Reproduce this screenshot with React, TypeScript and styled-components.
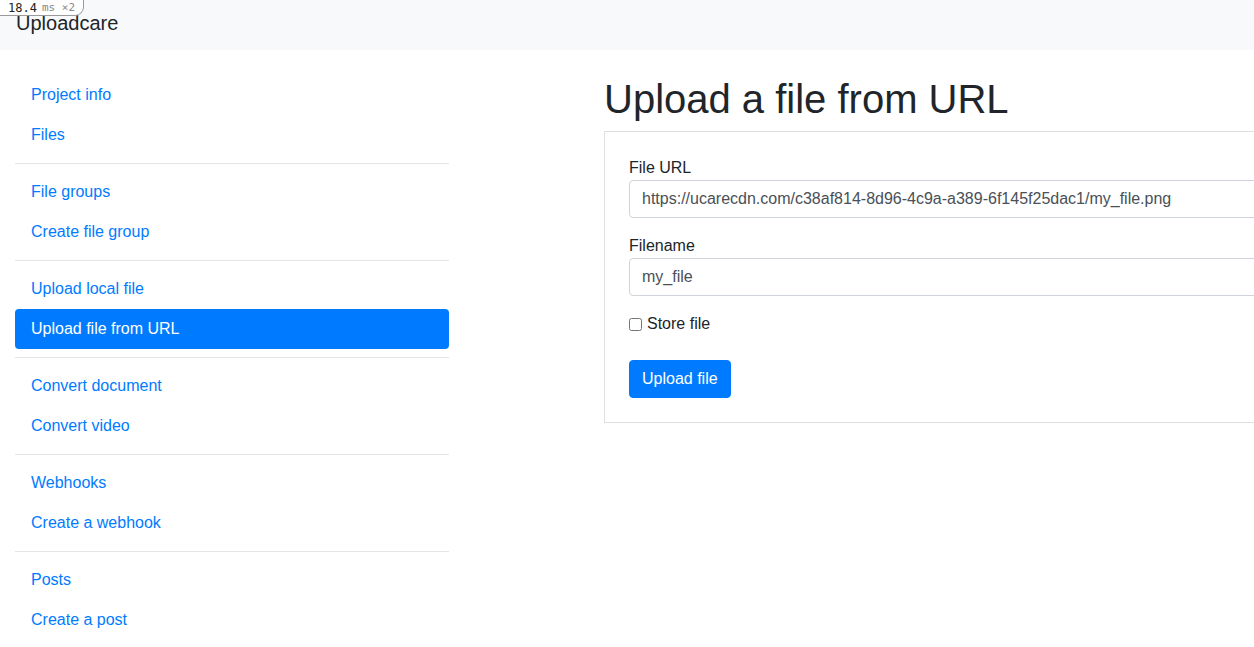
import React from "react";
import styled, { createGlobalStyle } from "styled-components";

const Global = createGlobalStyle`
  html, body { margin: 0; padding: 0; }
  body {
    font-family: "Liberation Sans", Arial, sans-serif;
    font-size: 16px;
    line-height: 1.5;
    color: #212529;
    background: #fff;
    overflow: hidden;
  }
  * { box-sizing: border-box; }
`;

const Navbar = styled.nav`
  height: 50px;
  background: #f8f9fa;
  padding: 8px 16px 0;
`;

const Brand = styled.a`
  font-size: 20px;
  line-height: 30px;
  color: #212529;
  text-decoration: none;
`;

const Badge = styled.div`
  position: absolute;
  top: -1px;
  left: -1px;
  height: 17px;
  padding: 0 8px 0 8px;
  display: flex;
  align-items: center;
  gap: 5px;
  background: #fff;
  border: 1px solid #9a9a9a;
  border-radius: 0 0 9px 0;
  font-family: "DejaVu Sans Mono", "Liberation Mono", monospace;
  line-height: 14px;
`;

const BadgeValue = styled.span`
  font-size: 12px;
  color: #222;
`;

const BadgeUnit = styled.span`
  font-size: 11px;
  color: #888;
`;

const Layout = styled.div`
  display: grid;
  grid-template-columns: 434px 760px;
  column-gap: 155px;
  padding: 25px 0 0 15px;
  width: 1400px;
`;

const Sidebar = styled.nav`
  display: flex;
  flex-direction: column;
`;

const NavLink = styled.a<{ $active?: boolean }>`
  display: block;
  padding: 8px 16px;
  line-height: 24px;
  font-size: 16px;
  color: ${(p) => (p.$active ? "#fff" : "#007bff")};
  background: ${(p) => (p.$active ? "#007bff" : "transparent")};
  border-radius: 4px;
  text-decoration: none;
`;

const Divider = styled.hr`
  margin: 8px 0;
  border: 0;
  border-top: 1px solid rgba(0, 0, 0, 0.1);
`;

const Main = styled.main`
  display: flex;
  flex-direction: column;
`;

const Title = styled.h1`
  margin: 0 0 8px;
  font-size: 40px;
  line-height: 48px;
  font-weight: 500;
  color: #212529;
`;

const Card = styled.form`
  border: 1px solid rgba(0, 0, 0, 0.125);
  padding: 24px;
  display: flex;
  flex-direction: column;
`;

const Group = styled.div`
  display: flex;
  flex-direction: column;
  margin-bottom: 16px;
`;

const Label = styled.label`
  line-height: 24px;
  font-size: 16px;
`;

const Input = styled.input`
  height: 38px;
  padding: 6px 12px;
  font-family: inherit;
  font-size: 16px;
  line-height: 24px;
  color: #495057;
  background: #fff;
  border: 1px solid #ced4da;
  border-radius: 4px;
  outline: none;
`;

const CheckRow = styled.label`
  display: flex;
  align-items: center;
  line-height: 24px;
  margin-bottom: 24px;
`;

const Checkbox = styled.input`
  width: 13px;
  height: 13px;
  margin: 0 5px 0 0;
`;

const Button = styled.button`
  align-self: flex-start;
  height: 38px;
  padding: 6px 12px;
  font-family: inherit;
  font-size: 16px;
  line-height: 24px;
  color: #fff;
  background: #007bff;
  border: 1px solid #007bff;
  border-radius: 4px;
`;

const groups = [
  ["Project info", "Files"],
  ["File groups", "Create file group"],
  ["Upload local file", "Upload file from URL"],
  ["Convert document", "Convert video"],
  ["Webhooks", "Create a webhook"],
  ["Posts", "Create a post"],
];

export default function App() {
  return (
    <>
      <Global />
      <Navbar>
        <Brand href="#">Uploadcare</Brand>
      </Navbar>
      <Badge>
        <BadgeValue>18.4</BadgeValue>
        <BadgeUnit>ms ×2</BadgeUnit>
      </Badge>
      <Layout>
        <Sidebar>
          {groups.map((g, i) => (
            <React.Fragment key={i}>
              {i > 0 && <Divider />}
              {g.map((item) => (
                <NavLink key={item} href="#" $active={item === "Upload file from URL"}>
                  {item}
                </NavLink>
              ))}
            </React.Fragment>
          ))}
        </Sidebar>
        <Main>
          <Title>Upload a file from URL</Title>
          <Card onSubmit={(e) => e.preventDefault()}>
            <Group>
              <Label>File URL</Label>
              <Input defaultValue="https://ucarecdn.com/c38af814-8d96-4c9a-a389-6f145f25dac1/my_file.png" />
            </Group>
            <Group>
              <Label>Filename</Label>
              <Input defaultValue="my_file" />
            </Group>
            <CheckRow>
              <Checkbox type="checkbox" />
              Store file
            </CheckRow>
            <Button type="submit">Upload file</Button>
          </Card>
        </Main>
      </Layout>
    </>
  );
}
